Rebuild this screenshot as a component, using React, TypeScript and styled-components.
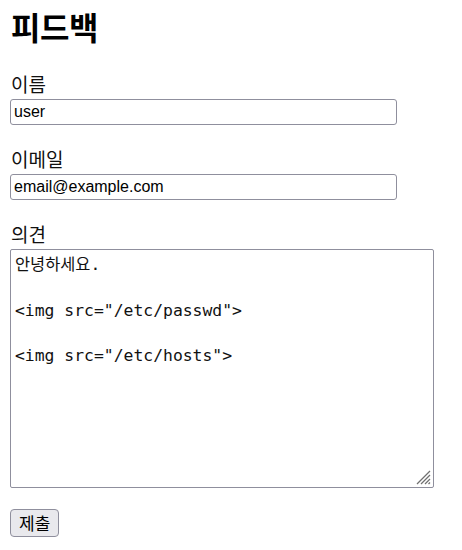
import React from "react";
import styled, { createGlobalStyle } from "styled-components";

const Global = createGlobalStyle`
  html, body { margin: 0; padding: 0; background: #ffffff; }
  body { font-family: "Noto Sans CJK KR", "Liberation Sans", sans-serif; color: #000; }
`;

const Page = styled.form`
  display: flex;
  flex-direction: column;
  align-items: flex-start;
  padding: 6px 0 0 10px;
`;

const Title = styled.h1`
  margin: 0 0 26px 1px;
  font-size: 32px;
  line-height: 40px;
  font-weight: 700;
  letter-spacing: -0.5px;
`;

const Field = styled.div<{ $gap: number }>`
  display: flex;
  flex-direction: column;
  align-items: flex-start;
  gap: 3px;
  margin-bottom: ${(p) => p.$gap}px;
`;

const Label = styled.label`
  font-size: 19px;
  line-height: 24px;
  padding-left: 1px;
  color: #111;
`;

const TextInput = styled.input`
  box-sizing: border-box;
  width: 387px;
  height: 26px;
  margin: 0;
  padding: 0 3px;
  border: 1px solid #8f8f9d;
  border-radius: 3px;
  font-family: "Liberation Sans", Arial, sans-serif;
  font-size: 16px;
  color: #000;
  background: #fff;
  outline: none;
`;

const AreaWrap = styled.div`
  position: relative;
`;

const Area = styled.textarea`
  box-sizing: border-box;
  display: block;
  width: 424px;
  height: 239px;
  margin: 0;
  padding: 4px 4px;
  border: 1px solid #8f8f9d;
  border-radius: 2px;
  font-family: "DejaVu Sans Mono", "Noto Sans CJK KR", monospace;
  font-size: 16.4px;
  line-height: 22.75px;
  color: #111;
  resize: none;
  outline: none;
  background: #fff;
`;

const Grip = styled.svg`
  position: absolute;
  right: 3px;
  bottom: 3px;
  width: 18px;
  height: 18px;
  pointer-events: none;
`;

const Submit = styled.button`
  box-sizing: border-box;
  height: 28px;
  padding: 0 8px;
  margin: 0;
  border: 1px solid #8f8f9d;
  border-radius: 4px;
  background: #e9e9ed;
  font-family: "Noto Sans CJK KR", sans-serif;
  font-size: 17px;
  line-height: 24px;
  color: #000;
`;

const text = `안녕하세요.

<img src="/etc/passwd">

<img src="/etc/hosts">`;

export default function App() {
  return (
    <>
      <Global />
      <Page onSubmit={(e) => e.preventDefault()}>
        <Title>피드백</Title>
        <Field $gap={22}>
          <Label htmlFor="name">이름</Label>
          <TextInput id="name" defaultValue="user" />
        </Field>
        <Field $gap={22}>
          <Label htmlFor="email">이메일</Label>
          <TextInput id="email" defaultValue="email@example.com" />
        </Field>
        <Field $gap={21}>
          <Label htmlFor="msg">의견</Label>
          <AreaWrap>
            <Area id="msg" defaultValue={text} />
            <Grip viewBox="0 0 18 18">
              <g stroke="#707070" strokeWidth="1.2">
                <line x1="17" y1="4" x2="4" y2="17" />
                <line x1="17" y1="8" x2="8" y2="17" />
                <line x1="17" y1="12" x2="12" y2="17" />
                <line x1="17" y1="15.5" x2="15.5" y2="17" />
              </g>
            </Grip>
          </AreaWrap>
        </Field>
        <Submit type="submit">제출</Submit>
      </Page>
    </>
  );
}
